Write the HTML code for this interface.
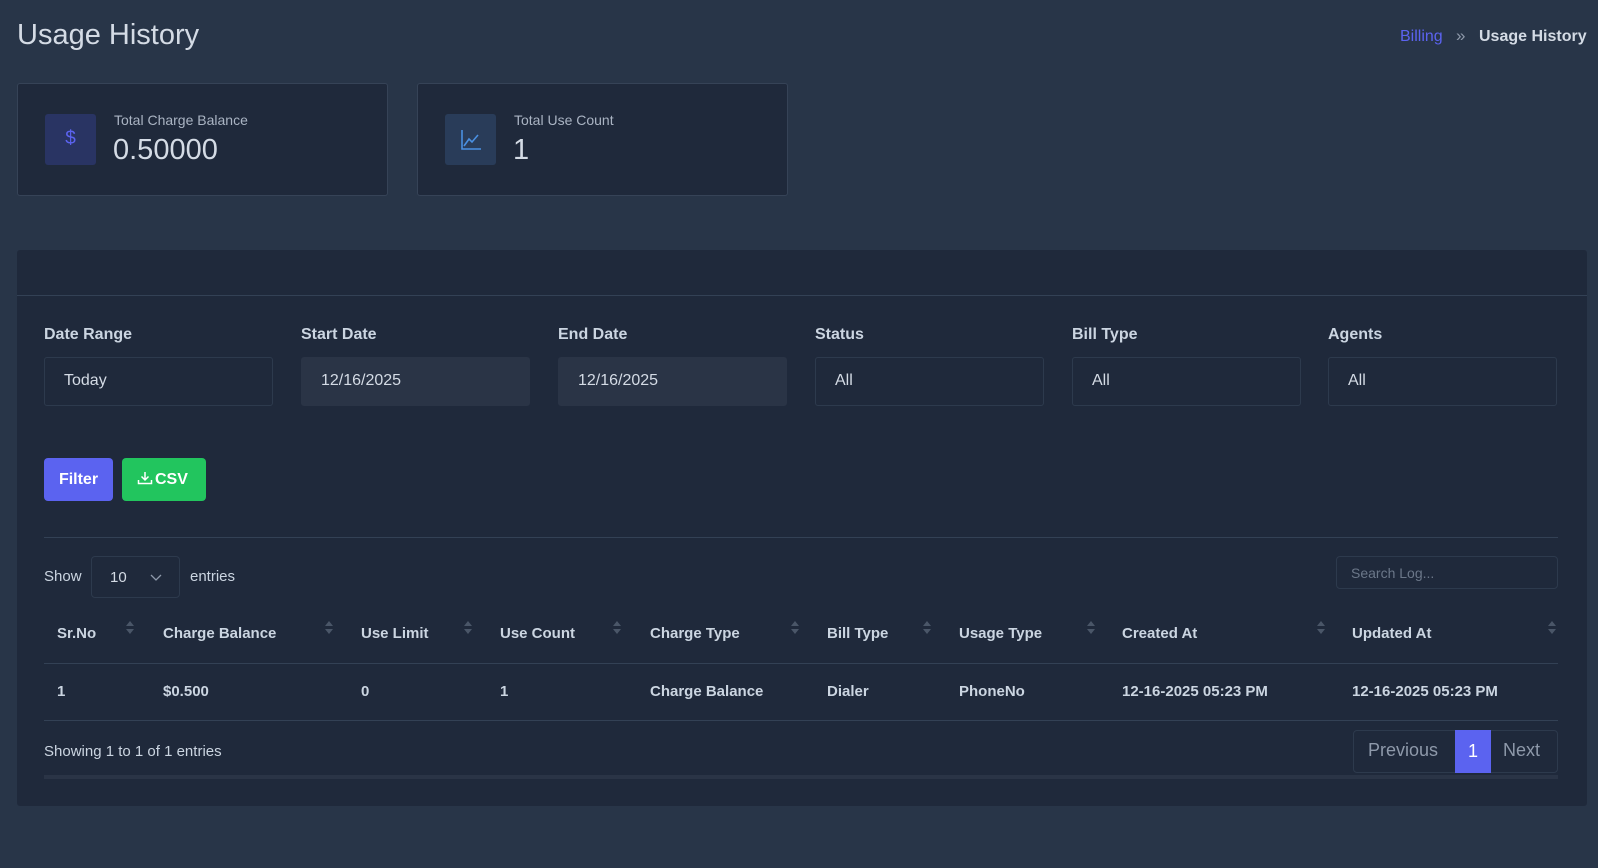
<!DOCTYPE html>
<html><head><meta charset="utf-8"><style>
*{box-sizing:border-box;margin:0;padding:0}
body{width:1598px;height:868px;background:#283548;font-family:"Liberation Sans",sans-serif;color:#cbd5e1;position:relative;overflow:hidden}
.abs{position:absolute}
.card{position:absolute;top:83px;width:371px;height:113px;background:#1f293b;border:1px solid #364357;border-radius:3px}
.ic{position:absolute;left:27px;top:30px;width:51px;height:51px;border-radius:3px}
.ct{position:absolute;left:96px;top:28px;font-size:14px;color:#aab4c3}
.cv{position:absolute;left:95px;top:50px;font-size:29px;color:#d4dbe5}
.panel{position:absolute;left:17px;top:250px;width:1570px;height:556px;background:#1f293b;border-radius:3px}
.lbl{position:absolute;top:326px;font-size:16px;font-weight:bold;color:#cbd5e1}
.inp{position:absolute;top:357px;width:229px;height:49px;border:1px solid #2d3a4d;border-radius:3px;background:#1f293b;font-size:16px;padding:14px 0 0 19px;color:#d4dbe5}
.inp.d{background:#2a3446;border-color:#2a3446}
.th{position:absolute;top:625px;font-size:15px;font-weight:bold;color:#cbd5e1}
.td{position:absolute;top:683px;font-size:15px;font-weight:bold;color:#cbd5e1}
.sort{position:absolute;top:621px;width:8px;height:14px}
.sort:before{content:"";position:absolute;left:0;top:0;border:4px solid transparent;border-bottom:5px solid #4a5668;border-top:0}
.sort:after{content:"";position:absolute;left:0;top:8px;border:4px solid transparent;border-top:5px solid #4a5668;border-bottom:0}
</style></head><body>
<div class="abs" style="left:17px;top:19px;font-size:29px;color:#d4dbe5">Usage History</div>
<div class="abs" style="left:1400px;top:28px;font-size:16px;color:#5b63f0">Billing</div>
<div class="abs" style="left:1456px;top:26px;font-size:17px;color:#8e99aa">»</div>
<div class="abs" style="left:1479px;top:28px;font-size:16px;color:#d4dbe5;font-weight:bold">Usage History</div>

<div class="card" style="left:17px"><div class="ic" style="background:#293463"><div style="position:absolute;left:0;right:0;top:14px;text-align:center;color:#5b63f0;font-size:19px">$</div></div><div class="ct">Total Charge Balance</div><div class="cv">0.50000</div></div>
<div class="card" style="left:417px"><div class="ic" style="background:#293c59"><svg width="51" height="51" viewBox="0 0 51 51"><path d="M17 16V35H36" stroke="#4a90e2" stroke-width="1.6" fill="none"/><path d="M19 32L24 25L27 28L33 21" stroke="#4a90e2" stroke-width="1.6" fill="none"/></svg></div><div class="ct">Total Use Count</div><div class="cv">1</div></div>

<div class="panel"></div>
<div class="abs" style="left:17px;top:295px;width:1570px;height:1px;background:#334155"></div>

<div class="lbl" style="left:44px">Date Range</div>
<div class="lbl" style="left:301px">Start Date</div>
<div class="lbl" style="left:558px">End Date</div>
<div class="lbl" style="left:815px">Status</div>
<div class="lbl" style="left:1072px">Bill Type</div>
<div class="lbl" style="left:1328px">Agents</div>
<div class="inp" style="left:44px">Today</div>
<div class="inp d" style="left:301px">12/16/2025</div>
<div class="inp d" style="left:558px">12/16/2025</div>
<div class="inp" style="left:815px">All</div>
<div class="inp" style="left:1072px">All</div>
<div class="inp" style="left:1328px">All</div>

<div class="abs" style="left:44px;top:458px;width:69px;height:43px;background:#5b63f0;border-radius:4px;color:#fff;font-size:16px;font-weight:bold;text-align:center;line-height:43px">Filter</div>
<div class="abs" style="left:122px;top:458px;width:84px;height:43px;background:#22c55e;border-radius:4px;color:#fff;font-size:16px;font-weight:bold;line-height:43px;padding-left:15px"><svg width="16" height="14" viewBox="0 0 16 14" style="vertical-align:-1px;margin-right:2px"><path d="M8 1V9M4.5 5.5L8 9L11.5 5.5M1.5 9V12.5H14.5V9" stroke="#fff" stroke-width="1.5" fill="none"/></svg>CSV</div>

<div class="abs" style="left:44px;top:537px;width:1514px;height:1px;background:#334155"></div>
<div class="abs" style="left:44px;top:568px;font-size:15px">Show</div>
<div class="abs" style="left:91px;top:556px;width:89px;height:42px;border:1px solid #2d3a4d;border-radius:4px;font-size:15px;padding:12px 0 0 18px;color:#d4dbe5">10<svg width="12" height="8" viewBox="0 0 12 8" style="position:absolute;left:58px;top:17px"><path d="M1 1L6 6L11 1" stroke="#8e99aa" stroke-width="1.3" fill="none"/></svg></div>
<div class="abs" style="left:190px;top:568px;font-size:15px">entries</div>
<div class="abs" style="left:1336px;top:556px;width:222px;height:33px;border:1px solid #2d3a4d;border-radius:4px;font-size:14px;padding:8px 0 0 14px;color:#6b7789">Search Log...</div>

<div class="th" style="left:57px">Sr.No</div><div class="sort" style="left:126px"></div>
<div class="th" style="left:163px">Charge Balance</div><div class="sort" style="left:325px"></div>
<div class="th" style="left:361px">Use Limit</div><div class="sort" style="left:464px"></div>
<div class="th" style="left:500px">Use Count</div><div class="sort" style="left:613px"></div>
<div class="th" style="left:650px">Charge Type</div><div class="sort" style="left:791px"></div>
<div class="th" style="left:827px">Bill Type</div><div class="sort" style="left:923px"></div>
<div class="th" style="left:959px">Usage Type</div><div class="sort" style="left:1087px"></div>
<div class="th" style="left:1122px">Created At</div><div class="sort" style="left:1317px"></div>
<div class="th" style="left:1352px">Updated At</div><div class="sort" style="left:1548px"></div>
<div class="abs" style="left:44px;top:663px;width:1514px;height:1px;background:#334155"></div>
<div class="td" style="left:57px">1</div>
<div class="td" style="left:163px">$0.500</div>
<div class="td" style="left:361px">0</div>
<div class="td" style="left:500px">1</div>
<div class="td" style="left:650px">Charge Balance</div>
<div class="td" style="left:827px">Dialer</div>
<div class="td" style="left:959px">PhoneNo</div>
<div class="td" style="left:1122px">12-16-2025 05:23 PM</div>
<div class="td" style="left:1352px">12-16-2025 05:23 PM</div>
<div class="abs" style="left:44px;top:720px;width:1514px;height:1px;background:#334155"></div>
<div class="abs" style="left:44px;top:743px;font-size:15px">Showing 1 to 1 of 1 entries</div>
<div class="abs" style="left:1353px;top:730px;width:205px;height:43px;border:1px solid #2d3a4d;border-radius:4px"></div>
<div class="abs" style="left:1368px;top:740px;font-size:18px;color:#8e99aa">Previous</div>
<div class="abs" style="left:1455px;top:730px;width:36px;height:43px;background:#5b63f0;color:#fff;font-size:18px;text-align:center;line-height:43px">1</div>
<div class="abs" style="left:1503px;top:740px;font-size:18px;color:#8e99aa">Next</div>
<div class="abs" style="left:44px;top:775px;width:1514px;height:4px;background:#2a3446"></div>
</body></html>
